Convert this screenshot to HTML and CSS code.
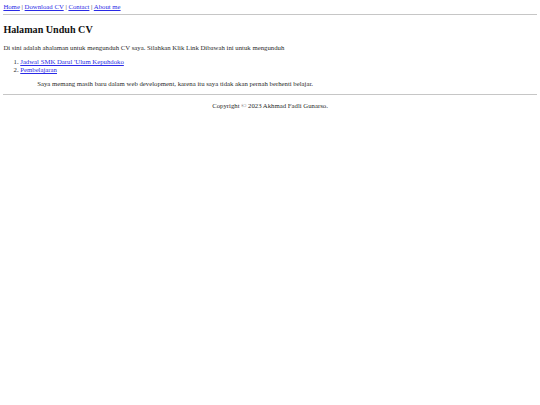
FILE: index.html
```html
<!DOCTYPE html>
<html>
<head>
<meta charset="utf-8">
<title>Halaman Unduh CV</title>
<link rel="stylesheet" href="styles.css">
</head>
<body class="page">
<nav class="nav"><a href="#">Home</a> | <a href="#">Download CV</a> | <a href="#">Contact</a> | <a href="#">About me</a></nav>
<hr class="rule">
<h2 class="title">Halaman Unduh CV</h2>
<p class="intro">Di sini adalah ahalaman untuk mengunduh CV saya. Silahkan Klik Link Dibawah ini untuk mengunduh</p>
<ol class="list">
<li><a href="#">Jadwal SMK Darul 'Ulum Kepuhdoko</a></li>
<li><a href="#">Pembelajaran</a></li>
</ol>
<p class="note">Saya memang masih baru dalam web development, karena itu saya tidak akan pernah berhenti belajar.</p>
<hr class="rule">
<footer class="footer">Copyright © 2023 Akhmad Fadli Gunarso.</footer>
</body>
</html>
```

FILE: styles.css
```css
html {
  background: #fff;
}
.page {
  margin: 3.375px;
  font-family: "Liberation Serif", "Times New Roman", serif;
  font-size: 6.75px;
  line-height: 7.76px;
  color: #2a2a2a;
}
.page a {
  color: #2a2ae6;
}
.nav {
  margin: 0;
}
.rule {
  margin: 2.6px 0 3.375px;
  height: 0;
  border: 0;
  border-top: 1px solid #c6c6c6;
}
.title {
  font-size: 10.125px;
  line-height: 11.64px;
  margin: 8.9px 0 8.4px;
  color: #111;
}
.intro {
  margin: 6.75px 0;
}
.list {
  margin: 6.75px 0;
  padding-left: 16.875px;
}
.note {
  margin: 6.2px 0;
  padding-left: 33.75px;
}
.footer {
  text-align: center;
  margin: 6.75px 0;
}
```
